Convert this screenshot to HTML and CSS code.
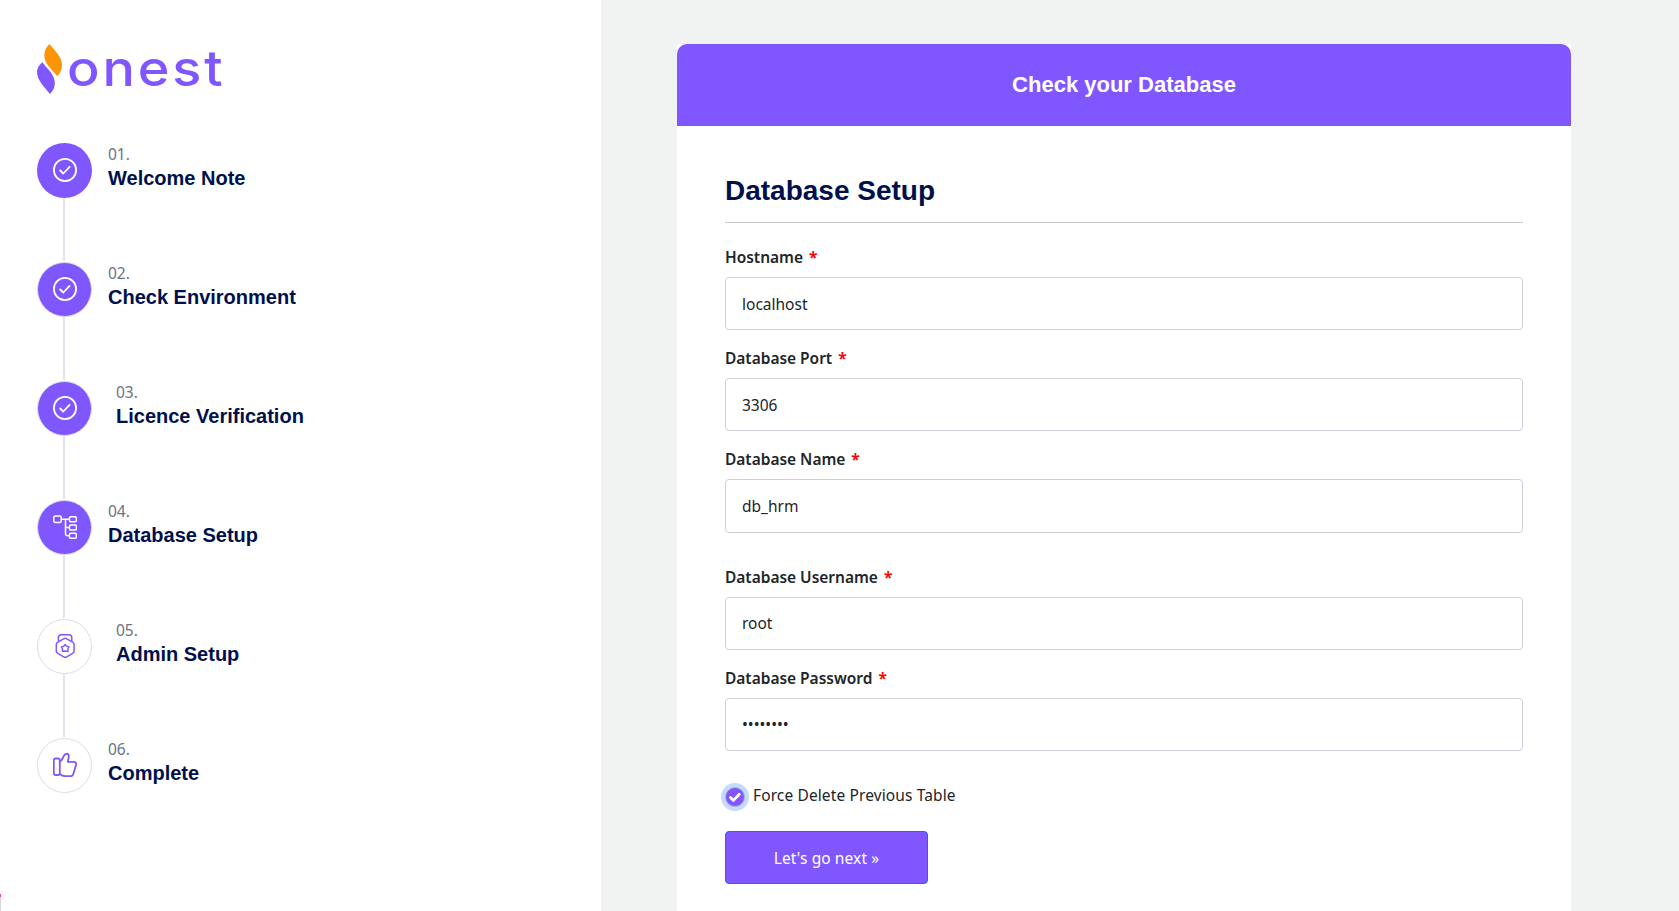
FILE: index.html
```html
<!DOCTYPE html>
<html lang="en">
<head>
<meta charset="utf-8">
<title>Database Setup</title>
<link rel="stylesheet" href="styles.css">
</head>
<body>
<main class="page">
  <aside class="sidebar">
    <div class="logo">
      <svg class="flame" width="25" height="50" viewBox="0 0 25 50" aria-hidden="true">
        <path fill="#fc9505" d="M12.3 0C9 3.500 7.300 7 7.300 11.500C7.300 19.500 14.500 25 20.300 32C23.500 28.500 25 25.500 25 21C25 12.500 18 7 12.300 0Z"/>
        <path fill="#8057ff" d="M5.300 18.300C1.500 21.500 0 24.500 0 28C0 36.500 7.500 43 13 50C16.500 46.500 17.800 43 17.800 39.300C17.800 31 11 25.500 5.300 18.300Z"/>
      </svg>
      <span class="wordmark">onest</span>
    </div>
    <ol class="steps">
      <li class="step filled">
        <span class="dot"><svg class="icon" viewBox="0 0 24 24"><circle cx="12" cy="12" r="11.1"/><path d="M7.200 12.500l3.100 3 6.300-6.600"/></svg></span>
        <div class="copy"><span class="num">01.</span><h3>Welcome Note</h3></div>
      </li>
      <li class="step filled ringed">
        <span class="dot"><svg class="icon" viewBox="0 0 24 24"><circle cx="12" cy="12" r="11.1"/><path d="M7.200 12.500l3.100 3 6.300-6.600"/></svg></span>
        <div class="copy"><span class="num">02.</span><h3>Check Environment</h3></div>
      </li>
      <li class="step filled ringed shifted">
        <span class="dot"><svg class="icon" viewBox="0 0 24 24"><circle cx="12" cy="12" r="11.1"/><path d="M7.200 12.500l3.100 3 6.300-6.600"/></svg></span>
        <div class="copy"><span class="num">03.</span><h3>Licence Verification</h3></div>
      </li>
      <li class="step filled ringed">
        <span class="dot"><svg class="icon thin" viewBox="0 0 24 24"><rect x=".7" y="1" width="7.600" height="6.400" rx="1.700"/><rect x="16.400" y="1.700" width="7" height="5" rx="1.500"/><rect x="16.400" y="10" width="7" height="5" rx="1.500"/><rect x="16.400" y="18.300" width="7" height="5" rx="1.500"/><path d="M8.300 4.200h8.100M12.500 4.200v14.300q0 2.300 2.300 2.300h1.600M12.500 12.500h3.900"/></svg></span>
        <div class="copy"><span class="num">04.</span><h3>Database Setup</h3></div>
      </li>
      <li class="step ringed shifted">
        <span class="dot"><svg class="icon thin" viewBox="0 0 24 24"><path d="M12.200 4.300c.6 0 1 .2 1.500.5l5.900 3.400c1 .6 1.500 1.300 1.500 2.400v6.400c0 1.100-.5 1.800-1.500 2.400l-5.900 3.400c-1 .6-2 .6-3 0l-5.900-3.400c-1-.6-1.500-1.300-1.500-2.400v-6.400c0-1.100.5-1.800 1.500-2.400l5.900-3.400c.5-.3.900-.5 1.500-.5z"/><path d="M5.400 7.300V3.800Q5.400.7 8.500.7h7.200q3.100 0 3.100 3.100v3.500"/><path d="M12.200 10.600l1.300 1.500 2.500.9-1.100 2 .1 2.400-2.800-.3-2.800.3.100-2.400-1.100-2 2.500-.9z"/></svg></span>
        <div class="copy"><span class="num">05.</span><h3>Admin Setup</h3></div>
      </li>
      <li class="step ringed">
        <span class="dot"><svg class="icon" viewBox="0 0 24 24"><rect x=".8" y="5.500" width="6" height="16.500" rx="1.700"/><path d="M6.800 8.500c1.800-.7 2.800-2.600 3.900-5.300C11.400 1.500 12.300.8 13.600.8c1.900 0 2.500 1.500 2.100 3.200L14.800 8.900h6.100c1.700 0 2.600 1.200 2.200 2.800l-2.700 9c-.5 1.700-1.300 2.500-3 2.500h-5c-1.800 0-3.700-.6-5.600-2.400"/></svg></span>
        <div class="copy"><span class="num">06.</span><h3>Complete</h3></div>
      </li>
    </ol>
    <div class="edge-tab"></div>
  </aside>

  <section class="content">
    <div class="card">
      <header class="card-head"><h1>Check your Database</h1></header>
      <form class="form">
        <h2>Database Setup</h2>
        <div class="field"><label for="host">Hostname <b>*</b></label><input id="host" type="text" value="localhost"></div>
        <div class="field"><label for="port">Database Port <b>*</b></label><input id="port" type="text" value="3306"></div>
        <div class="field last"><label for="name">Database Name <b>*</b></label><input id="name" type="text" value="db_hrm"></div>
        <div class="field"><label for="user">Database Username <b>*</b></label><input class="raised" id="user" type="text" value="root"></div>
        <div class="field"><label for="pass">Database Password <b>*</b></label><div class="masked" id="pass">••••••••</div></div>
        <div class="force">
          <span class="tick"><svg width="18" height="18" viewBox="0 0 18 18"><path d="M4.500 9.400l3 3 5.800-6.200" fill="none" stroke="#fff" stroke-width="2.800" stroke-linecap="round" stroke-linejoin="round"/></svg></span>
          <span class="force-text">Force Delete Previous Table</span>
        </div>
        <button class="next" type="button">Let's go next »</button>
      </form>
    </div>
  </section>
</main>
</body>
</html>
```

FILE: styles.css
```css
* { box-sizing: border-box; }

body {
  margin: 0;
  height: 911px;
  overflow: hidden;
  background: #fff;
  color: #212529;
  font: 15.5px/24px "Noto Sans", sans-serif;
}

h1, h2, h3 {
  margin: 0;
  font-family: "Liberation Sans", sans-serif;
  font-weight: 700;
}

.page { display: flex; height: 911px; }

.sidebar {
  position: relative;
  width: 601px;
  flex: none;
  padding: 44px 37px 0;
}

.logo { display: flex; height: 50px; gap: 5px; }
.flame { flex: none; }

.wordmark {
  margin-top: -1px;
  color: #8057ff;
  font: 500 50px/50px Inter, sans-serif;
  letter-spacing: 2.6px;
  transform: scaleX(1.08);
  transform-origin: left;
}

.steps { list-style: none; margin: 49px 0 0; padding: 0; }

.step {
  display: flex;
  align-items: flex-start;
  position: relative;
  height: 119px;
  gap: 16px;
}

.step:not(:last-child)::after {
  content: "";
  position: absolute;
  left: 26px;
  top: 55px;
  width: 2px;
  height: 63px;
  background: #e1e4ee;
}

.dot {
  display: flex;
  flex: none;
  width: 55px;
  height: 55px;
  padding: 15px 0 0 16px;
  border-radius: 50%;
  color: #8057ff;
}

.ringed .dot { border: 1px solid #dcdee5; padding: 14px 0 0 15px; }
.filled .dot { background: #8057ff; color: #fff; }

.icon {
  width: 24px;
  height: 24px;
  fill: none;
  stroke: currentColor;
  stroke-width: 1.8;
  stroke-linecap: round;
  stroke-linejoin: round;
}
.thin { stroke-width: 1.5; }

.copy { margin-top: -1px; }
.shifted .copy { padding-left: 8px; }
.num { display: block; color: #6b7385; font-size: 15.5px; line-height: 24px; }
.copy h3 { color: #00104d; font-size: 20px; line-height: 24px; }

/* Collapsed toolbar peeking in at the window edge */
.edge-tab {
  position: absolute;
  left: 0;
  bottom: 0;
  width: 1px;
  height: 17px;
  border-top: 3px solid #fa4a5c;
  background: #d6d6d6;
}

.content { flex: 1; padding: 44px 108px 0 76px; background: #f0f3f2; }
.card { height: 867px; background: #fff; }

.card-head {
  display: flex;
  align-items: center;
  justify-content: center;
  height: 82px;
  border-radius: 10px 10px 0 0;
  background: #8057ff;
}
.card-head h1 { color: #fff; font-size: 22px; line-height: 26px; }

.form { padding: 48px 48px 0; }

.form h2 {
  height: 49px;
  margin-bottom: 22px;
  border-bottom: 1px solid #c8c8ca;
  color: #00104d;
  font-size: 28px;
  line-height: 34px;
}

.field { margin-bottom: 16px; }
.field label { display: block; height: 24px; margin-bottom: 8px; font-weight: 600; letter-spacing: -.02px; }
.field label b { margin-left: 2px; color: #f00; font-weight: 700; }

.field input, .masked {
  display: block;
  width: 100%;
  height: 53px;
  padding: 0 16px;
  border: 1px solid #ced1da;
  border-radius: 4px;
  background: #fff;
  color: #212529;
  font: 15.5px/51px "Noto Sans", sans-serif;
}
.field.last { margin-bottom: 32px; }
.field.last input { height: 54px; }
.field .raised { padding-bottom: 2px; }

.force { display: flex; align-items: center; height: 24px; margin-top: 34px; }

.tick {
  display: flex;
  flex: none;
  width: 20px;
  height: 20px;
  border: 1px solid #b5aecb;
  border-radius: 50%;
  background: #8057ff;
  box-shadow: 0 0 0 4px #c2dbfe;
}
.force-text { margin: -5px 0 0 8px; letter-spacing: .12px; }

.next {
  display: block;
  width: 203px;
  height: 53px;
  margin-top: 22px;
  border: 1px solid #0d6efd;
  border-radius: 4px;
  background: #8057ff;
  color: #fff;
  font: 15.5px/24px "Noto Sans", sans-serif;
  letter-spacing: .1px;
}
```
